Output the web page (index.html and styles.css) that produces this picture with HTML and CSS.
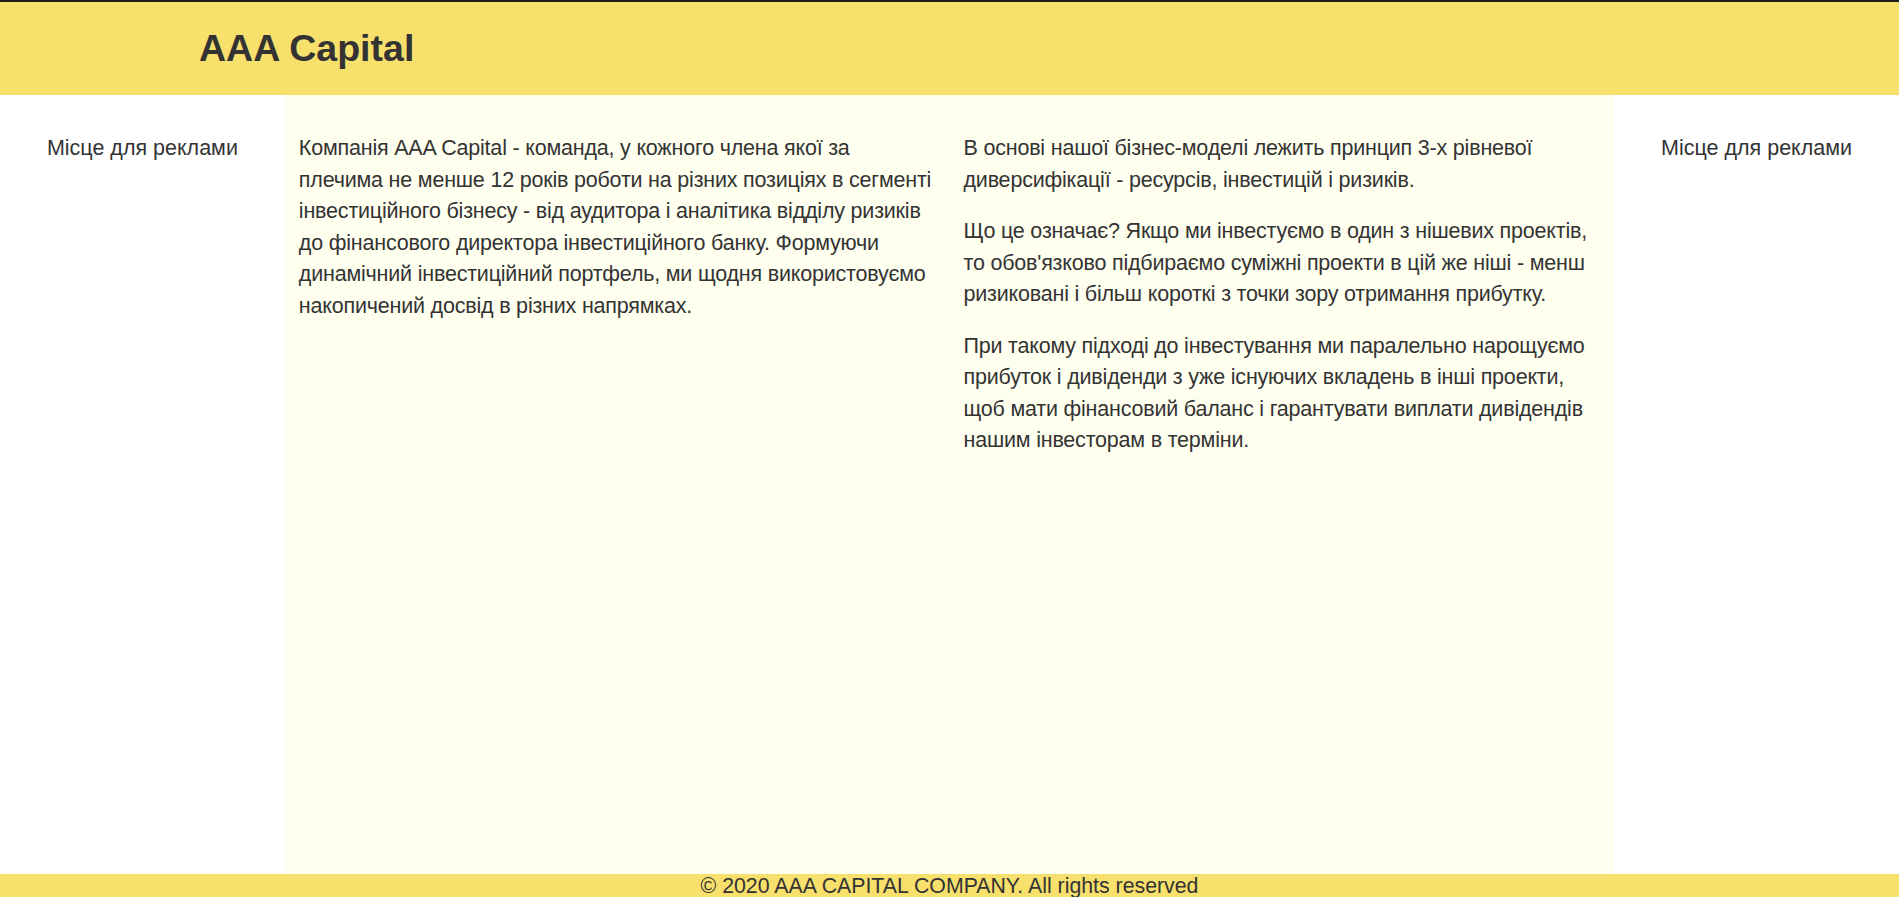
FILE: index.html
```html
<!DOCTYPE html>
<html lang="uk">
<head>
<meta charset="utf-8">
<title>AAA Capital</title>
<link rel="stylesheet" href="styles.css">
</head>
<body>
<div class="page">
  <header class="site-header">
    <h1 class="logo">AAA Capital</h1>
  </header>
  <main class="layout">
    <aside class="ad">
      <p>Місце для реклами</p>
    </aside>
    <section class="content">
      <div class="text-col text-col-left">
        <p>Компанія AAA Capital - команда, у кожного члена якої за<br>плечима не менше 12 років роботи на різних позиціях в сегменті інвестиційного бізнесу - від аудитора і аналітика відділу ризиків до фінансового директора інвестиційного банку. Формуючи динамічний інвестиційний портфель, ми щодня використовуємо накопичений досвід в різних напрямках.</p>
      </div>
      <div class="text-col">
        <p>В основі нашої бізнес-моделі лежить принцип 3-х рівневої диверсифікації - ресурсів, інвестицій і ризиків.</p>
        <p>Що це означає? Якщо ми інвестуємо в один з нішевих проектів, то обов'язково підбираємо суміжні проекти в цій же ніші - менш ризиковані і більш короткі з точки зору отримання прибутку.</p>
        <p>При такому підході до інвестування ми паралельно нарощуємо прибуток і дивіденди з уже існуючих вкладень в інші проекти, щоб мати фінансовий баланс і гарантувати виплати дивідендів нашим інвесторам в терміни.</p>
      </div>
    </section>
    <aside class="ad">
      <p>Місце для реклами</p>
    </aside>
  </main>
  <footer class="site-footer">© 2020 AAA CAPITAL COMPANY. All rights reserved</footer>
</div>
</body>
</html>
```

FILE: styles.css
```css
* { box-sizing: border-box; }

html, body {
  margin: 0;
  padding: 0;
}

body {
  font-family: "Liberation Sans", Arial, sans-serif;
  color: #333;
  background: #fff;
  font-size: 21.5px;
}

.page {
  min-height: 100vh;
  display: flex;
  flex-direction: column;
}

.site-header {
  height: 95px;
  border-top: 2px solid #1c1c1c;
  background: #f8e06c;
  display: flex;
  align-items: center;
  padding-left: 199px;
}

.logo {
  margin: 0;
  font-size: 37.5px;
  font-weight: bold;
  color: #333;
}

.layout {
  flex: 1;
  display: flex;
}

.ad {
  width: 15%;
  text-align: center;
  padding-top: 38px;
}

.content {
  width: 70%;
  background: #fffff0;
  display: flex;
  padding-top: 38px;
}

.text-col {
  width: 50%;
  padding: 0 14px;
  letter-spacing: -0.2px;
}

.text-col-left {
  padding-right: 0;
}

.layout p {
  margin: 0 0 20px;
  line-height: 31.5px;
}

.site-footer {
  background: #f8e06c;
  text-align: center;
  font-size: 21.3px;
  color: #333;
  height: 23px;
  line-height: 24px;
}
```
